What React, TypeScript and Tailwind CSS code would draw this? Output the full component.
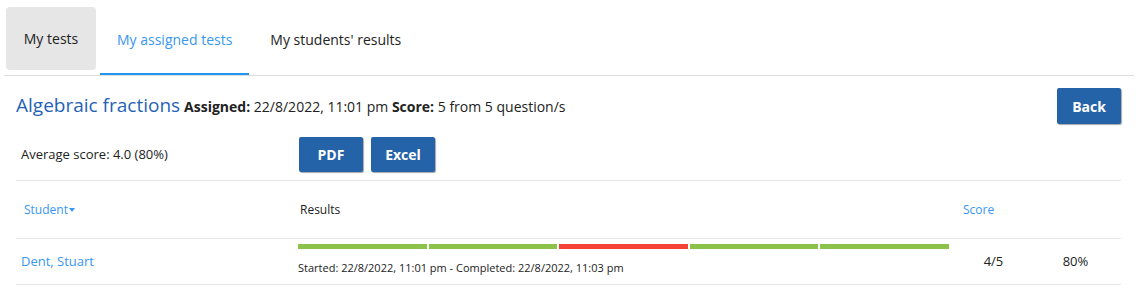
import { useState } from 'react'

const tabs = ['My tests', 'My assigned tests', "My students' results"]

const answers = [true, true, false, true, true]

function BlueButton({ label, className = '' }: { label: string; className?: string }) {
  return (
    <button
      type="button"
      className={`h-[35px] w-[64px] rounded-[2px] bg-[#2563a9] text-[14px] font-bold text-white shadow-[1px_1px_1px_rgba(0,0,0,0.35)] ${className}`}
    >
      {label}
    </button>
  )
}

export default function App() {
  const [activeTab, setActiveTab] = useState(1)

  return (
    <div className="min-h-screen bg-white text-[#222] [font-family:'Open_Sans',sans-serif]">
      {/* Tabs */}
      <nav className="mx-[4px] flex items-start gap-[4px] border-b border-[#dedede] pl-[2px] pt-[7px]">
        {tabs.map((tab, i) =>
          i === 0 ? (
            <button
              key={tab}
              type="button"
              onClick={() => setActiveTab(i)}
              className="flex h-[63px] w-[90px] items-center justify-center rounded-[4px] bg-[#e6e6e6] text-[14px] text-[#222]"
            >
              {tab}
            </button>
          ) : (
            <button
              key={tab}
              type="button"
              onClick={() => setActiveTab(i)}
              className={`flex h-[68px] items-center border-b-2 px-[17px] pb-[1px] text-[14px] ${
                activeTab === i ? 'border-[#2196f3] text-[#3897f0]' : 'border-transparent text-[#222]'
              }`}
            >
              {tab}
            </button>
          ),
        )}
      </nav>

      <div className="pl-[16px] pr-[17px]">
        {/* Title row */}
        <div className="flex items-center justify-between pt-[12px]">
          <div className="flex items-baseline gap-[4px] pb-[2px]">
            <h1 className="text-[19px] text-[#1f63b6]">Algebraic fractions</h1>
            <p className="text-[14px] text-[#222]">
              <span className="font-bold">Assigned:</span> 22/8/2022, 11:01 pm <span className="font-bold">Score:</span> 5
              from 5 question/s
            </p>
          </div>
          <BlueButton label="Back" className="h-[36px]" />
        </div>

        {/* Average + exports */}
        <div className="flex items-center border-b border-[#e6e6e6] pb-[8px] pt-[13px]">
          <div className="w-[274px] pl-[5px] text-[13px] text-[#222]">Average score: 4.0 (80%)</div>
          <div className="flex gap-[8px] pl-[9px]">
            <BlueButton label="PDF" />
            <BlueButton label="Excel" />
          </div>
        </div>

        {/* Table header */}
        <div className="grid h-[58px] grid-cols-[274px_667px_73px_91px] items-center border-b border-[#e6e6e6] text-[12px]">
          <div className="flex items-center pl-[8px] text-[#3897f0]">
            Student
            <svg width="6" height="4" viewBox="0 0 6 4" className="ml-[1px] mt-[1px]">
              <path d="M0 0h6L3 4z" fill="#3897f0" />
            </svg>
          </div>
          <div className="pl-[10px] text-[#222]">Results</div>
          <div className="pl-[6px] text-[#3897f0]">Score</div>
          <div />
        </div>

        {/* Row */}
        <div className="grid h-[46px] grid-cols-[274px_667px_73px_91px] border-b border-[#e6e6e6] text-[13px]">
          <div className="flex items-center pl-[5px] text-[#3897f0]">Dent, Stuart</div>
          <div className="px-[8px] pt-[5px]">
            <div className="flex gap-[2px]">
              {answers.map((ok, i) => (
                <div key={i} className={`h-[5px] flex-1 ${ok ? 'bg-[#8bc34a]' : 'bg-[#f44336]'}`} />
              ))}
            </div>
            <p className="mt-[11px] text-[11px] leading-[15px] text-[#222]">
              Started: 22/8/2022, 11:01 pm - Completed: 22/8/2022, 11:03 pm
            </p>
          </div>
          <div className="flex items-center justify-center text-[#222]">4/5</div>
          <div className="flex items-center justify-center text-[#222]">80%</div>
        </div>
      </div>
    </div>
  )
}
